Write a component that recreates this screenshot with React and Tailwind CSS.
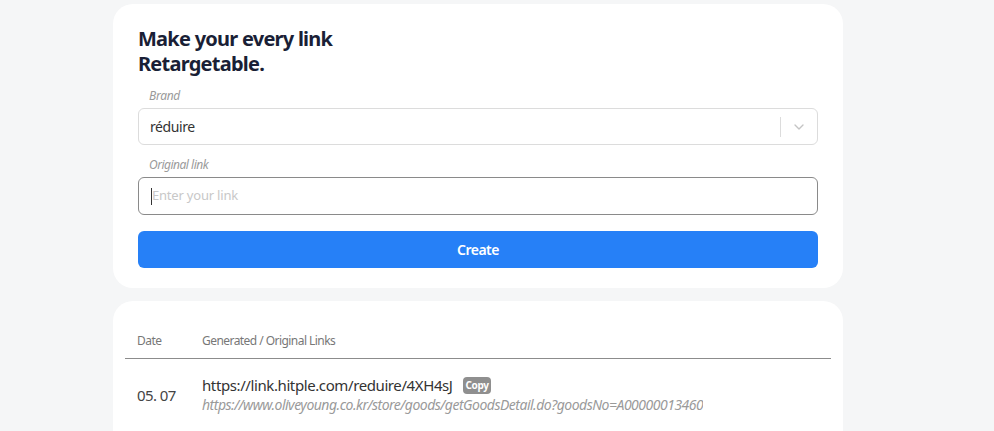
import { ChevronDown } from 'lucide-react'

const row = {
  date: '05. 07',
  short: 'https://link.hitple.com/reduire/4XH4sJ',
  original: 'https://www.oliveyoung.co.kr/store/goods/getGoodsDetail.do?goodsNo=A000000134609',
}

export default function App() {
  return (
    <div
      className="h-[431px] w-full overflow-hidden bg-[#f5f6f7] pt-[4px]"
      style={{ fontFamily: '"Noto Sans", "Open Sans", sans-serif' }}
    >
      <div className="ml-[113px] flex w-[730px] flex-col gap-[13px]">
        {/* form card */}
        <section className="rounded-[20px] bg-white px-[25px] pb-[20px] pt-[22px]">
          <h1 className="text-[20px] font-bold leading-[25px] tracking-[-0.75px] text-[#1a1f36]">
            Make your every link
            <br />
            Retargetable.
          </h1>

          <label className="mt-[12px] block pl-[11px] text-[12px] italic leading-[16px] tracking-[-0.3px] text-[#9a9a9a]">
            Brand
          </label>
          <div className="mt-[4px] flex h-[37px] items-center rounded-[6px] border border-[#dcdcdc] bg-white pl-[11px]">
            <span className="flex-1 text-[14px] tracking-[-0.4px] text-[#333]">réduire</span>
            <span className="h-[20px] w-px bg-[#dcdcdc]" />
            <span className="flex w-[36px] items-center justify-center text-[#c4c4c4]">
              <ChevronDown size={16} strokeWidth={2} />
            </span>
          </div>

          <label className="mt-[12px] block pl-[11px] text-[12px] italic leading-[16px] tracking-[-0.5px] text-[#9a9a9a]">
            Original link
          </label>
          <div className="mt-[4px] flex h-[38px] items-center rounded-[6px] border border-[#8a8a8a] bg-white pl-[12px]">
            <span className="h-[17px] w-px bg-[#333]" />
            <span className="text-[13px] tracking-[-0.2px] text-[#c8c8c8]">Enter your link</span>
          </div>

          <button
            type="button"
            className="mt-[16px] flex h-[37px] w-full items-center justify-center rounded-[6px] bg-[#2680f7] text-[14px] font-semibold tracking-[-0.5px] text-white"
          >
            Create
          </button>
        </section>

        {/* history card */}
        <section className="h-[200px] rounded-[20px] bg-white px-[12px] pt-[31px]">
          <div className="flex items-center border-b border-[#8c8c8c] pb-[8px] text-[12px] leading-[18px] tracking-[-0.55px] text-[#777]">
            <span className="w-[77px] pl-[12px]">Date</span>
            <span>Generated / Original Links</span>
          </div>
          <div className="flex items-center pt-[16px]">
            <span className="w-[77px] pl-[12px] text-[15px] tracking-[-0.6px] text-[#444]">{row.date}</span>
            <div className="flex min-w-0 flex-col">
              <div className="flex items-center gap-[10px]">
                <span className="text-[15px] leading-[20px] tracking-[-0.4px] text-[#333]">{row.short}</span>
                <span className="rounded-[4px] bg-[#8f8f8f] px-[3px] text-[10px] font-bold leading-[17px] tracking-[-0.4px] text-white">
                  Copy
                </span>
              </div>
              <span className="w-[501px] overflow-hidden whitespace-nowrap text-[14px] italic leading-[20px] tracking-[-0.5px] text-[#9a9a9a]">
                {row.original}
              </span>
            </div>
          </div>
        </section>
      </div>
    </div>
  )
}
